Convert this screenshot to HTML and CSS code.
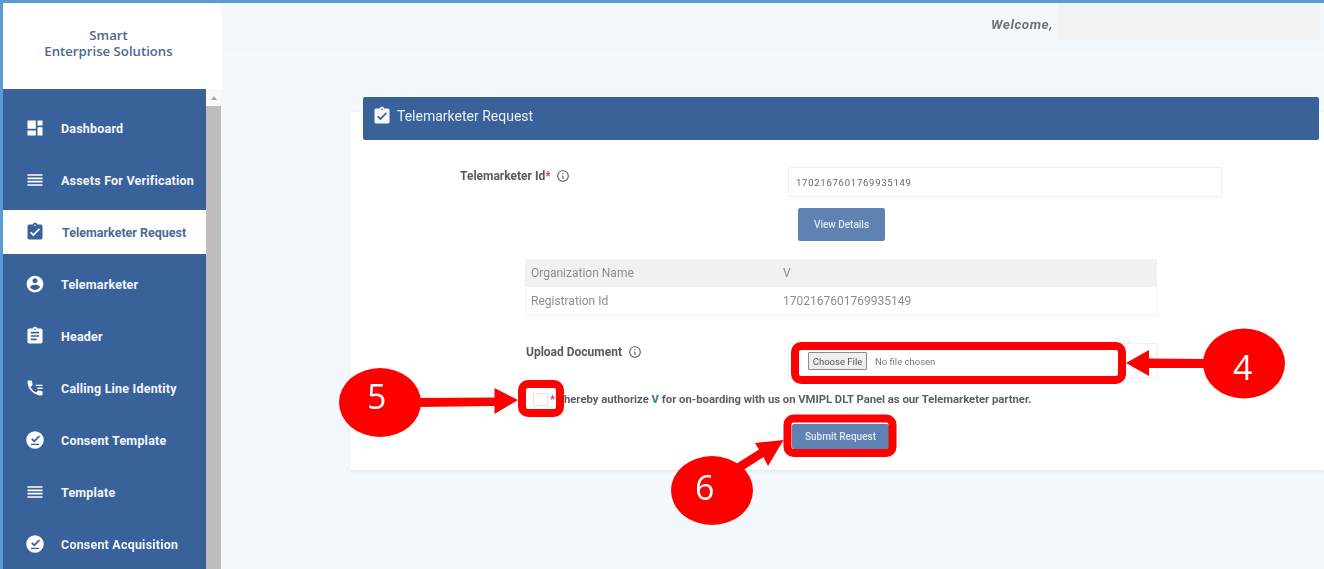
FILE: index.html
```html
<!DOCTYPE html>
<html lang="en">
<head>
<meta charset="utf-8">
<title>Telemarketer Request</title>
<link rel="stylesheet" href="styles.css">
</head>
<body>
<svg class="defs" width="0" height="0" aria-hidden="true">
  <symbol id="i-dash" viewBox="0 0 24 24"><path d="M3 13h10V3H3v10zm0 8h10v-6H3v6zm12 0h6V11h-6v10zm0-18v6h6V3h-6z"/></symbol>
  <symbol id="i-list" viewBox="0 0 24 24"><path d="M3 15h18v-2H3v2zm0 4h18v-2H3v2zm0-8h18V9H3v2zm0-6v2h18V5H3z"/></symbol>
  <symbol id="i-check" viewBox="0 0 24 24"><path d="M19 3h-4.18C14.4 1.84 13.3 1 12 1c-1.3 0-2.4.84-2.82 2H5c-1.1 0-2 .9-2 2v14c0 1.1.9 2 2 2h14c1.1 0 2-.9 2-2V5c0-1.1-.9-2-2-2zm-7 0c.55 0 1 .45 1 1s-.45 1-1 1-1-.45-1-1 .45-1 1-1zm-2 14l-4-4 1.41-1.41L10 14.17l6.59-6.59L18 9l-8 8z"/></symbol>
  <symbol id="i-user" viewBox="0 0 24 24"><path d="M12 2C6.48 2 2 6.48 2 12s4.48 10 10 10 10-4.48 10-10S17.52 2 12 2zm0 3c1.66 0 3 1.34 3 3s-1.34 3-3 3-3-1.34-3-3 1.34-3 3-3zm0 14.2c-2.5 0-4.71-1.28-6-3.22.03-1.99 4-3.08 6-3.08 1.99 0 5.97 1.09 6 3.08-1.29 1.94-3.5 3.22-6 3.22z"/></symbol>
  <symbol id="i-clip" viewBox="0 0 24 24"><path d="M19 3h-4.18C14.4 1.84 13.3 1 12 1c-1.3 0-2.4.84-2.82 2H5c-1.1 0-2 .9-2 2v14c0 1.1.9 2 2 2h14c1.1 0 2-.9 2-2V5c0-1.1-.9-2-2-2zm-7 0c.55 0 1 .45 1 1s-.45 1-1 1-1-.45-1-1 .45-1 1-1zm2 14H7v-2h7v2zm3-4H7v-2h10v2zm0-4H7V7h10v2z"/></symbol>
  <symbol id="i-phone" viewBox="0 0 24 24"><path d="M6.62 10.79c1.44 2.83 3.76 5.14 6.59 6.59l2.2-2.2c.27-.27.67-.36 1.02-.24 1.12.37 2.33.57 3.57.57.55 0 1 .45 1 1V20c0 .55-.45 1-1 1-9.39 0-17-7.61-17-17 0-.55.45-1 1-1h3.5c.55 0 1 .45 1 1 0 1.25.2 2.45.57 3.57.11.35.03.74-.25 1.02l-2.2 2.2z"/><path d="M13 8h8v1.6h-8zM15 11.500h6v1.600h-6z"/></symbol>
  <symbol id="i-consent" viewBox="0 0 24 24"><path fill-rule="evenodd" d="M12 1.500a10.500 10.500 0 1 0 0 21 10.500 10.500 0 0 0 0-21zM16.500 6.500l1.500 1.500-7 7-3.500-3.500 1.500-1.500 2 2zM7 16.500h10v1.500H7z"/></symbol>
  <symbol id="i-info" viewBox="0 0 24 24"><path d="M11 7h2v2h-2zm0 4h2v6h-2zm1-9C6.480 2 2 6.480 2 12s4.480 10 10 10 10-4.480 10-10S17.520 2 12 2zm0 18c-4.410 0-8-3.590-8-8s3.590-8 8-8 8 3.590 8 8-3.590 8-8 8z"/></symbol>
</svg>

<div class="app">
  <aside class="sidebar">
    <div class="logo"><span>Smart</span><span>Enterprise Solutions</span></div>
    <div class="side-body">
      <nav class="nav">
        <a class="nav-item"><svg class="ico"><use href="#i-dash"/></svg><span>Dashboard</span></a>
        <a class="nav-item"><svg class="ico"><use href="#i-list"/></svg><span>Assets For Verification</span></a>
        <a class="nav-item active"><svg class="ico"><use href="#i-check"/></svg><span>Telemarketer Request</span></a>
        <a class="nav-item"><svg class="ico"><use href="#i-user"/></svg><span>Telemarketer</span></a>
        <a class="nav-item"><svg class="ico"><use href="#i-clip"/></svg><span>Header</span></a>
        <a class="nav-item"><svg class="ico"><use href="#i-phone"/></svg><span>Calling Line Identity</span></a>
        <a class="nav-item"><svg class="ico"><use href="#i-consent"/></svg><span>Consent Template</span></a>
        <a class="nav-item"><svg class="ico"><use href="#i-list"/></svg><span>Template</span></a>
        <a class="nav-item"><svg class="ico"><use href="#i-consent"/></svg><span>Consent Acquisition</span></a>
      </nav>
      <div class="scrollbar"><div class="scroll-up"></div><div class="scroll-thumb"></div></div>
    </div>
  </aside>

  <main class="main">
    <header class="topbar">
      <span class="welcome">Welcome,</span>
      <div class="user-mask"></div>
    </header>
    <section class="card">
      <div class="card-head">
        <svg class="head-ico"><use href="#i-check"/></svg>
        <h1>Telemarketer Request</h1>
      </div>
      <div class="form-row id-row">
        <label class="field-label id-label">Telemarketer Id<em>*</em> <svg class="info"><use href="#i-info"/></svg></label>
        <input class="text-input" type="text" value="1702167601769935149">
      </div>
      <button class="btn view-btn" type="button">View Details</button>
      <div class="details">
        <div class="detail-row shaded"><span class="dt">Organization Name</span><span>V</span></div>
        <div class="detail-row"><span class="dt">Registration Id</span><span>1702167601769935149</span></div>
      </div>
      <div class="form-row upload-row">
        <label class="field-label upload-label">Upload Document <svg class="info"><use href="#i-info"/></svg></label>
        <div class="file-box"><input class="file-input" type="file"></div>
      </div>
      <div class="consent-row">
        <input class="check" type="checkbox">
        <span class="consent-text"><em>*</em> I hereby authorize <b>V</b> for on-boarding with us on VMIPL DLT Panel as our Telemarketer partner.</span>
      </div>
      <button class="btn submit-btn" type="button">Submit Request</button>
    </section>
  </main>
</div>

<svg class="callouts" viewBox="0 0 1324 569" width="1324" height="569">
  <g class="boxes">
    <rect x="795" y="346" width="327" height="34" rx="6"/>
    <rect x="522" y="384" width="38" height="29" rx="6"/>
    <rect x="787.500" y="418.500" width="105" height="34.500" rx="6"/>
  </g>
  <g class="arrows">
    <path d="M1126 363 1149 350V358.500L1205 359V368L1149 368V376Z"/>
    <path d="M518 400 494.500 388V397.500L418 398V407L494.500 406V414Z"/>
    <path d="M783.500 440 755 443 759 449.500 736 464 741 471.500 763.500 457 768 466Z"/>
  </g>
  <g class="badges">
    <ellipse cx="1244" cy="363.500" rx="41" ry="35"/>
    <ellipse cx="380" cy="402.500" rx="41" ry="34.500"/>
    <ellipse cx="712" cy="490.500" rx="41" ry="34.500"/>
  </g>
  <g class="badge-text">
    <text x="1233" y="380">4</text>
    <text x="367" y="409">5</text>
    <text x="695" y="500">6</text>
  </g>
</svg>
</body>
</html>
```

FILE: styles.css
```css
* { box-sizing: border-box; }
html, body { margin: 0; height: 569px; overflow: hidden; background: #f3f8fc; }
body { position: relative; font-family: Roboto, "Liberation Sans", sans-serif; }
.defs { position: absolute; }

.app {
  display: flex;
  height: 569px;
  border-top: 3px solid #5b9bd5;
  border-left: 3px solid #5b9bd5;
  filter: blur(0.6px);
}

.sidebar { width: 219px; flex: none; display: flex; flex-direction: column; }
.logo {
  height: 86px;
  background: #fff;
  display: flex;
  flex-direction: column;
  align-items: center;
  padding: 24px 8px 0 0;
  font: 600 13.2px/16px "Open Sans", sans-serif;
  color: #4a6a94;
}
.side-body { flex: 1; display: flex; min-height: 0; }
.nav {
  width: 203px;
  background: #39629a;
  padding-top: 17px;
  display: flex;
  flex-direction: column;
  gap: 8px;
}
.nav-item {
  height: 44px;
  flex: none;
  display: flex;
  align-items: center;
  padding: 0 0 0 22px;
  gap: 16px;
  color: #f2f6fb;
  font-size: 12.5px;
  letter-spacing: .2px;
  font-weight: 700;
  white-space: nowrap;
}
.nav-item span { margin-top: 1px; }
.nav-item.active { background: #fff; color: #4d6a92; letter-spacing: 0; gap: 17px; }
.ico { width: 20px; height: 20px; fill: #fff; flex: none; }
.active .ico { fill: #39629a; }
.scrollbar { width: 15px; display: flex; flex-direction: column; background: #f8f9fa; }
.scroll-up { height: 17px; display: flex; align-items: center; justify-content: center; }
.scroll-up::before {
  content: "";
  border: 3px solid transparent;
  border-top: 0;
  border-bottom: 4px solid #a8a8a8;
}
.scroll-thumb { flex: 1; background: #bdbdbd; }

.main { flex: 1; min-width: 0; display: flex; flex-direction: column; }
.topbar {
  height: 47px;
  flex: none;
  display: flex;
  justify-content: flex-end;
  align-items: flex-start;
  gap: 5px;
  padding-right: 4px;
  border-bottom: 1px solid #eef3f7;
}
.welcome {
  margin-top: 13px;
  font-size: 13.5px;
  letter-spacing: .55px;
  font-weight: 700;
  font-style: italic;
  color: #6f7479;
}
.user-mask { width: 262px; height: 37px; background: #f1f2f3; }

.card {
  position: relative;
  margin: 62px 0 0 128px;
  height: 358px;
  background: #fff;
  box-shadow: 0 1px 3px rgba(120, 140, 160, .18);
}
.card-head {
  height: 43px;
  margin: -15px 5px 0 13px;
  padding-left: 9px;
  display: flex;
  align-items: center;
  gap: 5px;
  background: #39629a;
  border-radius: 2px;
  color: #e9eff7;
}
.card-head h1 { margin: 0 0 6px; font-size: 14px; font-weight: 400; }
.head-ico { width: 20px; height: 20px; fill: #f4f7fb; margin-bottom: 6px; }

.form-row { display: flex; align-items: flex-start; }
.field-label {
  display: flex;
  align-items: center;
  font-size: 12px;
  font-weight: 700;
  color: #565a5e;
  white-space: pre;
}
.field-label em { font-style: normal; color: #d9363e; }
.info { width: 14px; height: 14px; fill: #666; margin-left: 3px; }
.id-row { margin: 27px 0 0 110px; }
.id-label { width: 328px; margin-top: 2px; }
.id-label .info { margin-left: 5px; }
.text-input {
  width: 434px;
  height: 30px;
  padding: 0 7px;
  border: 1px solid #eeeeee;
  border-radius: 2px;
  background: #fff;
  font: 9.5px Roboto, sans-serif;
  letter-spacing: .75px;
  color: #666;
  outline: none;
}
.btn {
  display: block;
  border: 0;
  border-radius: 2px;
  background: #5f82b3;
  color: #dfe8f3;
  font: 500 10px Roboto, sans-serif;
  padding: 0;
}
.view-btn { width: 87px; height: 33px; margin: 11px 0 0 448px; }
.details { width: 632px; margin: 18px 0 0 175px; border-bottom: 1px solid #f2f2f2; }
.detail-row {
  display: flex;
  align-items: center;
  height: 28px;
  padding: 0 0 1px 6px;
  font-size: 12px;
  color: #8a8e92;
  box-shadow: inset 1px 0 #f6f6f6, inset -1px 0 #f6f6f6;
}
.detail-row.shaded { background: #f1f1f1; box-shadow: none; }
.dt { width: 252px; flex: none; }
.upload-row { margin: 27px 0 0 176px; }
.upload-label { width: 262px; margin-top: 2px; }
.file-box {
  width: 369px;
  height: 35px;
  padding: 8px 0 0 19px;
  border: 1px solid #f1f1f1;
}
.file-input { display: block; font: 9.5px Roboto, sans-serif; color: #777; width: 200px; }
.file-input::file-selector-button {
  width: 59px;
  height: 18px;
  margin-right: 8px;
  padding: 0;
  font: 9.5px Roboto, sans-serif;
  color: #555;
  background: #efefef;
  border: 1px solid #8d8d8d;
  border-radius: 1px;
}
.consent-row { display: flex; align-items: center; margin: 14px 0 0 183px; height: 14px; }
.check {
  appearance: none;
  width: 15px;
  height: 13px;
  margin: 0;
  border: 1px solid #d6e8e6;
  background: #fff;
  flex: none;
}
.consent-text {
  margin-left: 2px;
  font-size: 11.25px;
  font-weight: 700;
  color: #5b5f63;
  white-space: nowrap;
}
.consent-text em { color: #d9363e; font-style: normal; }
.consent-text b { color: #3f86a8; }
.submit-btn { width: 97px; height: 25px; margin: 18px 0 0 442px; }

.callouts { position: absolute; left: 0; top: 0; }
.boxes rect { fill: none; stroke: #ff0000; stroke-width: 8; }
.arrows path, .badges ellipse { fill: #ff0000; }
.badge-text text { fill: #fff; font: 400 34px "Open Sans", sans-serif; }
```
